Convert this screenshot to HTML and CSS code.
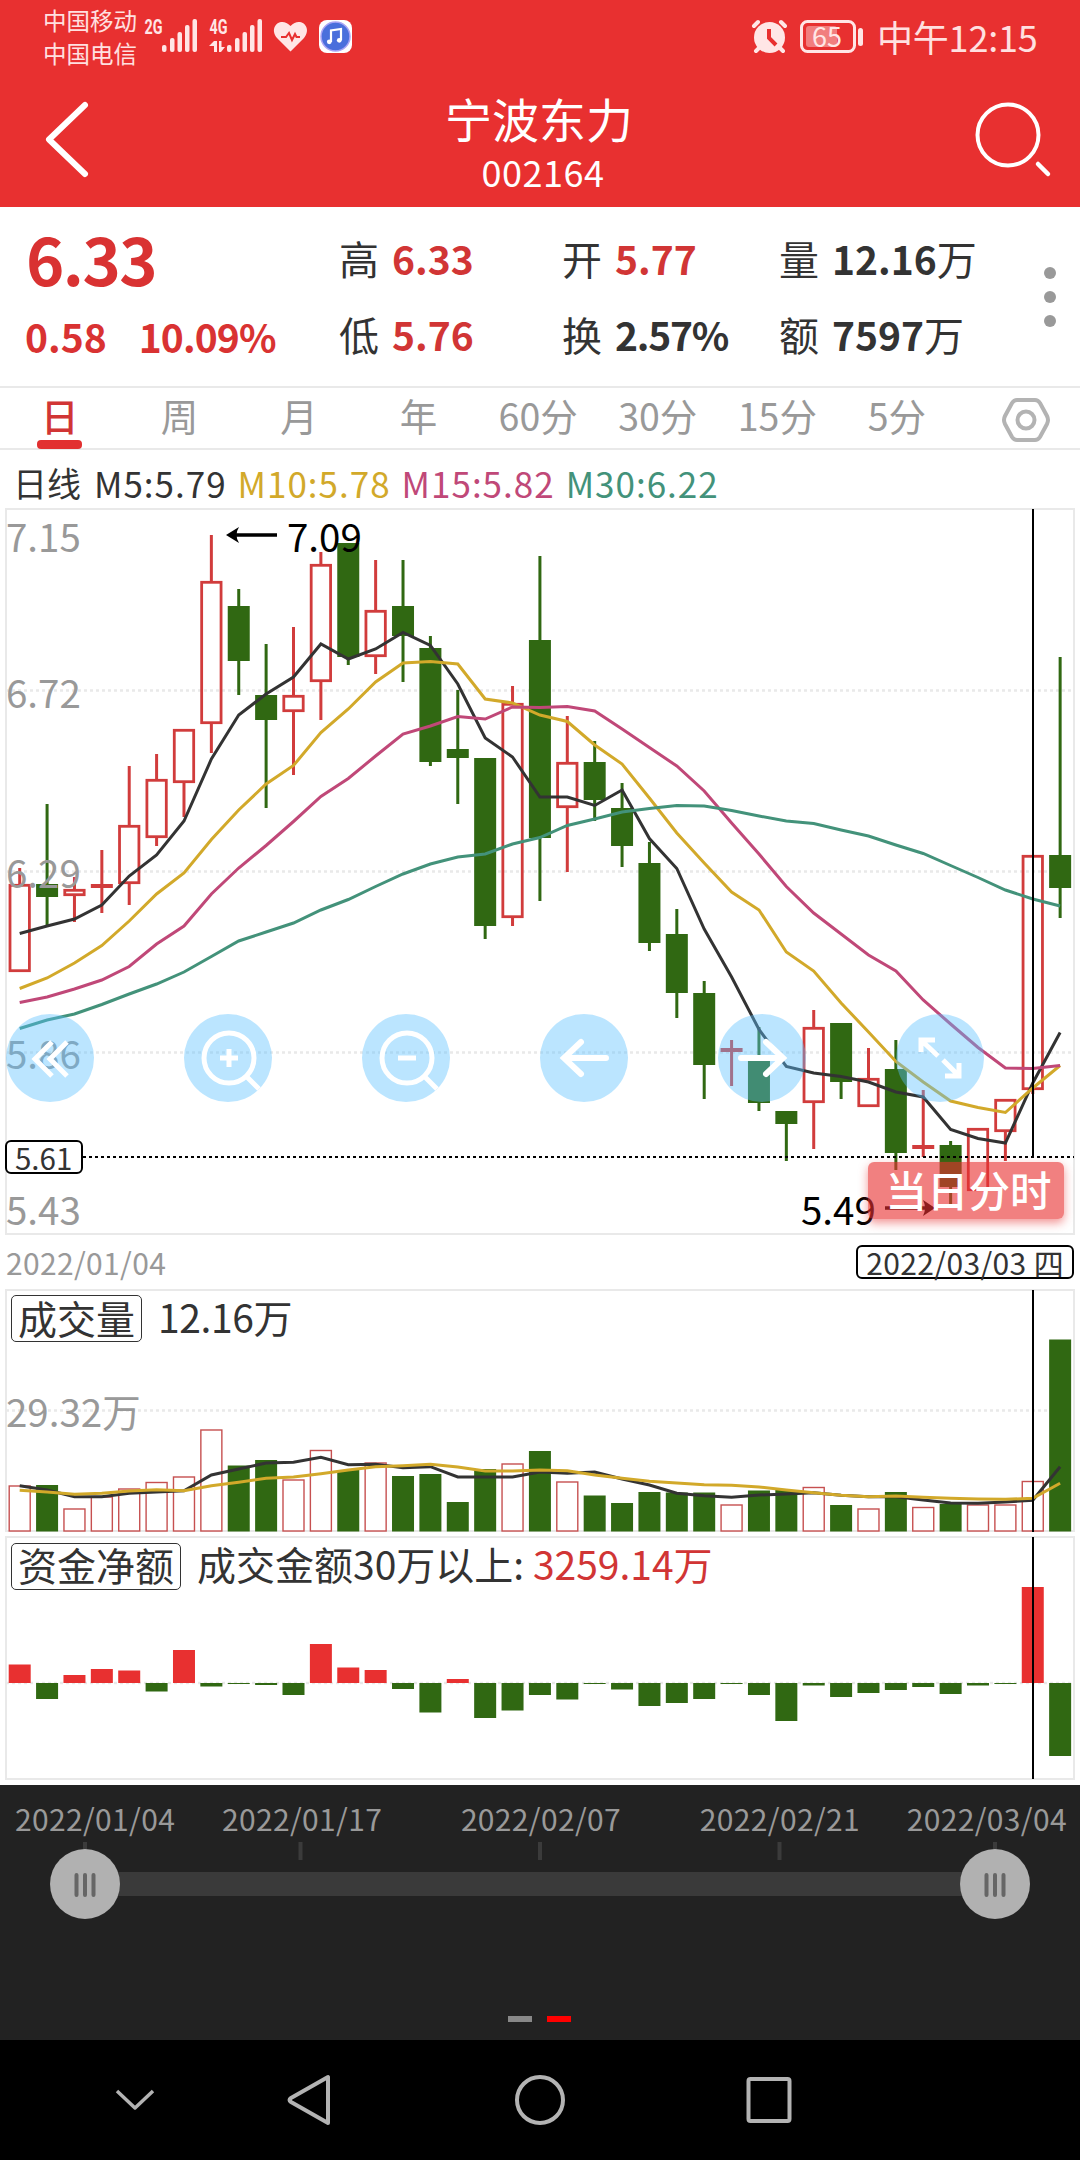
FILE: index.html
```
<!DOCTYPE html>
<html lang="zh-CN">
<head>
  <meta charset="UTF-8" />
  <meta name="viewport" content="width=device-width, initial-scale=1.0"/>
  <title>宁波东力 002164</title>
  <link rel="stylesheet" href="styles.css">
</head>
<body>
  <header class="top">
    <div class="status-bar">
      <div class="carriers">
        <span>中国移动</span>
        <span>中国电信</span>
      </div>
      <svg class="status-icons" width="220" height="72" viewBox="140 0 220 72">
        <g fill="#ffe6e6">
          <text x="144.500" y="34" class="net" textLength="18" lengthAdjust="spacingAndGlyphs">2G</text>
          <rect x="162" y="45" width="4.500" height="7" rx="2"/>
          <rect x="170" y="38" width="4.500" height="14" rx="2"/>
          <rect x="177.500" y="32" width="4.500" height="20" rx="2"/>
          <rect x="185" y="25" width="4.500" height="27" rx="2"/>
          <rect x="192.500" y="19" width="4.500" height="33" rx="2"/>
          <text x="209.500" y="34" class="net" textLength="18" lengthAdjust="spacingAndGlyphs">4G</text>
          <path d="M209 46L214 41H217V52H214V46ZM219 41H221.500V47H225L221 52H219Z"/>
          <rect x="227" y="45" width="4.500" height="7" rx="2"/>
          <rect x="235" y="38" width="4.500" height="14" rx="2"/>
          <rect x="242.500" y="32" width="4.500" height="20" rx="2"/>
          <rect x="250" y="25" width="4.500" height="27" rx="2"/>
          <rect x="257.500" y="19" width="4.500" height="33" rx="2"/>
          <path d="M290.500 51.500L277 38C268 27 281 16 290.500 26C300 16 313 27 304 38Z"/>
        </g>
        <path d="M281 37H286L289 33L292 40L295 34L296.500 37H300" fill="none" stroke="#e83030" stroke-width="2"/>
        <rect x="319" y="20" width="33" height="33" rx="8" fill="#fff"/>
        <circle cx="335.500" cy="36.500" r="14.500" fill="#4a6fdc" stroke="#a9a4f5" stroke-width="1.500"/>
        <path d="M331 42V30.500L341 29V40" fill="none" stroke="#fff" stroke-width="2.200"/>
        <circle cx="329.300" cy="41.800" r="2.400" fill="#fff"/>
        <circle cx="339.300" cy="40.300" r="2.400" fill="#fff"/>
      </svg>
      <div class="status-right">
        <svg width="115" height="72" viewBox="750 0 115 72">
          <circle cx="769.500" cy="37.500" r="15.500" fill="#ffe6e6"/>
          <path d="M754 26L758 22M785 26L781 22M756 51L760 47M783 51L779 47" stroke="#ffe6e6" stroke-width="4" stroke-linecap="round"/>
          <path d="M769 29V38L776 45" fill="none" stroke="#e83030" stroke-width="4"/>
          <rect x="801.500" y="21.500" width="53" height="30" rx="6" fill="none" stroke="#ffe6e6" stroke-width="3"/>
          <rect x="806" y="26" width="31" height="21" rx="3" fill="#f17e7e"/>
          <rect x="858" y="28" width="5" height="18" rx="2.500" fill="#ffe6e6"/>
          <text x="812" y="46.500" class="battery-text">65</text>
        </svg>
        <span class="clock">中午12:15</span>
      </div>
    </div>
    <div class="title-bar">
      <svg width="50" height="84" viewBox="44 97 50 84"><path d="M85 105L49 139.500L85 174" fill="none" stroke="#fff" stroke-width="6" stroke-linecap="round" stroke-linejoin="round"/></svg>
      <div class="title">
        <h1>宁波东力</h1>
        <p>002164</p>
      </div>
      <svg width="80" height="84" viewBox="974 97 80 84"><circle cx="1008" cy="135" r="30.500" fill="none" stroke="#fff" stroke-width="4"/><path d="M1038 164L1048 174" stroke="#fff" stroke-width="4.500" stroke-linecap="round"/></svg>
    </div>
  </header>

  <section class="quote">
    <div class="price">
      <strong>6.33</strong>
      <div class="change"><b>0.58</b><b>10.09%</b></div>
    </div>
    <div class="stat s1"><p>高 <b class="up">6.33</b></p><p>低 <b class="up">5.76</b></p></div>
    <div class="stat s2"><p>开 <b class="up">5.77</b></p><p>换 <b class="rate">2.57%</b></p></div>
    <div class="stat s3"><p>量 <b>12.16</b>万</p><p>额 <b>7597</b>万</p></div>
    <div class="more"><i></i><i></i><i></i></div>
  </section>

  <nav class="tabs">
    <a class="active">日</a><a>周</a><a>月</a><a>年</a><a>60分</a><a>30分</a><a>15分</a><a>5分</a>
    <svg width="50" height="46" viewBox="0 0 50 46" fill="none" stroke="#b3b3b3" stroke-width="4">
      <path d="M16 3H34Q37 3 39 6L46 19Q48 23 46 27L39 40Q37 43 34 43H16Q13 43 11 40L4 27Q2 23 4 19L11 6Q13 3 16 3Z"/>
      <circle cx="25" cy="23" r="8.500"/>
    </svg>
  </nav>

  <div class="legend">
    <span>日线</span><span>M5:5.79</span><span class="m10">M10:5.78</span><span class="m15">M15:5.82</span><span class="m30">M30:6.22</span>
  </div>

  <section class="k-panel">
    <svg id="k-chart" width="1080" height="729" viewBox="0 508 1080 729"></svg>
    <div class="tools">
      <button><svg viewBox="0 0 88 88"><path d="M46 28L29 45L46 62M61 28L44 45L61 62"/></svg></button>
      <button><svg viewBox="0 0 88 88"><circle cx="45" cy="44" r="25"/><path d="M63 63L75 75M36 44H54M45 35V53"/></svg></button>
      <button><svg viewBox="0 0 88 88"><circle cx="45" cy="44" r="25"/><path d="M63 63L75 75M36 44H54"/></svg></button>
      <button><svg viewBox="0 0 88 88"><path class="round" d="M41 28L24 44L41 60M26 44H66"/></svg></button>
      <button><svg viewBox="0 0 88 88"><path class="round" d="M48 28L65 44L48 60M63 44H23"/></svg></button>
      <button><svg viewBox="0 0 88 88"><path d="M25 38V26H39M26 27L42 42M47 46L63 62M63 49V62H49"/></svg></button>
    </div>
    <button class="minute">当日分时</button>
  </section>

  <div class="dates">
    <span>2022/01/04</span>
    <span class="picked">2022/03/03 四</span>
  </div>

  <section class="sub-panel volume">
    <svg id="vol-chart" width="1080" height="246" viewBox="0 1289 1080 246"></svg>
    <div class="sub-title"><span class="tag">成交量</span><span class="value">12.16万</span></div>
  </section>
  <section class="sub-panel fund">
    <svg id="fund-chart" width="1080" height="250" viewBox="0 1535 1080 250"></svg>
    <div class="sub-title"><span class="tag">资金净额</span><span>成交金额30万以上: <em>3259.14万</em></span></div>
  </section>

  <section class="range">
    <div class="range-dates">
      <span>2022/01/04</span><span>2022/01/17</span><span>2022/02/07</span><span>2022/02/21</span><span>2022/03/04</span>
    </div>
    <svg class="slider" width="1080" height="80" viewBox="0 1840 1080 80">
      <path d="M85 1842V1860M300.500 1842V1860M540 1842V1860M779.500 1842V1860M995 1842V1860" stroke="#3b3b3b" stroke-width="4"/>
      <rect x="85" y="1872" width="910" height="24" fill="#3a3a3a"/>
      <circle cx="85" cy="1884" r="35" fill="#b1b1b1"/>
      <circle cx="995" cy="1884" r="35" fill="#b1b1b1"/>
      <path d="M76.500 1875V1895M85 1875V1895M93.500 1875V1895M986.500 1875V1895M995 1875V1895M1003.500 1875V1895" stroke="#666" stroke-width="4" stroke-linecap="round"/>
    </svg>
    <div class="pager"><i></i><i class="on"></i></div>
  </section>

  <footer class="nav-bar">
    <svg width="1080" height="120" viewBox="0 2040 1080 120" fill="none" stroke="#b3b3b3" stroke-width="4" stroke-linejoin="round">
      <path d="M117 2091L135 2108L153 2091" stroke-width="3.500"/>
      <path d="M328 2077V2123L291 2102Q288 2100 291 2098Z"/>
      <circle cx="540" cy="2100" r="23"/>
      <rect x="748.500" y="2079" width="41" height="42" rx="2"/>
    </svg>
  </footer>

  <script src="chart.js"></script>
</body>
</html>
```
FILE: styles.css
```
* {
  box-sizing: border-box;
}
body {
  margin: 0;
  width: 1080px;
  height: 2160px;
  overflow: hidden;
  background: #fff;
  color: #333;
  font-family: "Noto Sans CJK SC", "Noto Sans", sans-serif;
}
h1, p {
  margin: 0;
  font-weight: normal;
}
svg {
  display: block;
}
button {
  border: none;
  padding: 0;
  font-family: inherit;
}

/* status bar + title */
.top {
  height: 207px;
  background: #e83030;
  color: #fff;
}
.status-bar {
  height: 74px;
  padding-left: 43px;
  display: flex;
  color: #ffe0e0;
}
.carriers {
  width: 97px;
  padding-top: 4px;
  display: flex;
  flex-direction: column;
  font-size: 23.5px;
  line-height: 33px;
}
.net {
  font: bold 21px Roboto, sans-serif;
}
.status-right {
  margin-left: auto;
  margin-right: 40px;
  display: flex;
}
.battery-text {
  font-size: 27px;
  fill: #ffe6e6;
}
.clock {
  margin-left: 12px;
  font-size: 36px;
  line-height: 73px;
  width: 163px;
  letter-spacing: -0.2px;
  white-space: nowrap;
}
.title-bar {
  padding: 23px 26px 0 44px;
  display: flex;
  justify-content: space-between;
}
.title {
  padding-left: 10px;
  text-align: center;
}
.title h1 {
  font-size: 47px;
  line-height: 42px;
}
.title p {
  font-size: 36px;
  line-height: 40px;
  margin-top: 12px;
  padding-left: 8px;
  letter-spacing: 0.5px;
}

/* quote */
.quote {
  height: 181px;
  padding: 20px 0 0 25px;
  display: flex;
  border-bottom: 2px solid #e9e9e9;
}
.price {
  width: 314px;
  color: #d93232;
}
.price strong {
  display: block;
  font-size: 65px;
  line-height: 62px;
  letter-spacing: -1.5px;
  padding-left: 1px;
}
.change {
  display: flex;
  gap: 32px;
  margin-top: 17px;
}
.change b {
  font-size: 39px;
  line-height: 60px;
  letter-spacing: -0.9px;
}
.change b:first-child {
  letter-spacing: 0;
}
.quote b {
  font-weight: 600;
}
.stat p {
  font-size: 40px;
  line-height: 63px;
  white-space: nowrap;
}
.stat p + p {
  margin-top: 13px;
}
.stat b {
  font-size: 39px;
  margin-left: 4px;
}
.stat .rate {
  letter-spacing: -1.2px;
}
.s1 {
  width: 223px;
}
.s2 {
  width: 217px;
}
.s3 {
  width: 265px;
}
.up {
  color: #d13535;
}
.more {
  display: flex;
  flex-direction: column;
  gap: 12px;
  padding-top: 40px;
}
.more i {
  width: 12px;
  height: 12px;
  border-radius: 50%;
  background: #999;
}

/* tabs */
.tabs {
  height: 62px;
  display: flex;
  border-bottom: 2px solid #e9e9e9;
}
.tabs a {
  width: 119.6px;
  font-size: 37.5px;
  line-height: 54px;
  text-align: center;
  color: #999;
}
.tabs .active {
  color: #d13535;
  font-weight: 500;
}
.tabs .active::after {
  content: "";
  display: block;
  width: 45px;
  height: 9px;
  margin: -2px auto 0;
  border-radius: 4px;
  background: #e23030;
}
.tabs svg {
  margin: 9px 0 0 44px;
}
.legend {
  height: 58px;
  padding-left: 13px;
  display: flex;
  gap: 11px;
  font-size: 35px;
  line-height: 65px;
  letter-spacing: 1px;
  white-space: nowrap;
}
.legend span:first-child {
  font-size: 34px;
  letter-spacing: 0;
  margin-right: 2px;
}
.m10 {
  color: #d2a92a;
}
.m15 {
  color: #c04878;
}
.m30 {
  color: #43927a;
}

/* charts */
.k-panel {
  position: relative;
  height: 729px;
}
.k-panel text, .sub-panel text {
  font-size: 38.5px;
}
.k-panel .small {
  font-size: 29.5px;
}
.tools {
  position: absolute;
  left: 6px;
  top: 506px;
  display: flex;
  gap: 90px;
}
.tools button {
  width: 88px;
  height: 88px;
  border-radius: 50%;
  background: rgba(89, 191, 255, 0.41);
}
.tools svg {
  fill: none;
  stroke: #fff;
  stroke-width: 5;
}
.tools .round {
  stroke-width: 6;
  stroke-linecap: round;
}
.minute {
  position: absolute;
  left: 868px;
  top: 654px;
  width: 196px;
  height: 57px;
  padding: 0 0 4px 5px;
  border-radius: 6px;
  background: rgba(232, 48, 48, 0.61);
  box-shadow: 0 4px 10px rgba(232, 48, 48, 0.5);
  color: #fff;
  font-size: 41.5px;
  font-weight: 500;
  line-height: 50px;
}
.dates {
  height: 52px;
  padding: 8px 6px 0;
  display: flex;
  justify-content: space-between;
  font-size: 30px;
  line-height: 35px;
  letter-spacing: 0.35px;
  color: #999;
}
.picked {
  height: 34px;
  padding: 0 8px;
  border: 2px solid #000;
  border-radius: 6px;
  line-height: 30px;
  color: #333;
}
.sub-panel {
  position: relative;
}
.volume {
  height: 246px;
}
.fund {
  height: 250px;
}
.sub-title {
  position: absolute;
  left: 11px;
  top: 6px;
  display: flex;
  gap: 16px;
  font-size: 39px;
  line-height: 43px;
  white-space: nowrap;
}
.sub-title .value {
  letter-spacing: -0.4px;
}
.fund .sub-title {
  top: 8px;
  line-height: 41px;
}
.tag {
  height: 47px;
  padding: 0 6px;
  border: 1.5px solid #333;
  border-radius: 5px;
}
.sub-title em {
  font-style: normal;
  color: #d13535;
}

/* range slider */
.range {
  height: 255px;
  background: #222;
}
.range-dates {
  display: flex;
  justify-content: space-between;
  height: 55px;
  padding: 5px 13px 0 15px;
  font-size: 30px;
  line-height: 57px;
  letter-spacing: 0.35px;
  color: #999;
}
.range-dates span:nth-child(2) {
  margin-right: 32px;
}
.range-dates span:nth-child(4) {
  margin-left: 32px;
}
.pager {
  display: flex;
  justify-content: center;
  gap: 15px;
  padding: 96px 2px 0 0;
}
.pager i {
  width: 24px;
  height: 6px;
  background: #888;
}
.pager .on {
  background: #f00;
}
.nav-bar {
  height: 120px;
  background: #000;
}
```
FILE: chart.js
```
const RED = "#d13c3c";
const GREEN = "#306812";
const x = i => 19.7 + i * 27.38;

// [up, high, top, bottom, low]
const candles = [
  [1,868,884,972,972],[0,804,884,897,926],[1,877,889,896,922],[1,850,884,888,913],[1,766,825,884,905],
  [1,754,779,838,846],[1,729,729,783,817],[1,535,581,724,753],[0,589,606,661,695],[0,644,695,720,808],
  [1,627,695,712,775],[1,552,564,682,720],[0,543,543,657,665],[1,560,610,657,674],[0,560,606,636,682],
  [0,636,648,762,766],[0,690,749,758,804],[0,758,758,926,939],[1,686,703,918,926],[0,556,640,838,901],
  [1,716,762,808,872],[0,741,762,800,821],[0,783,808,846,867],[0,842,863,943,951],[0,909,934,993,1018],
  [0,981,993,1065,1099],[1,1040,1048,1052,1086],[0,1027,1061,1103,1111],[0,1111,1111,1124,1161],[1,1010,1027,1103,1149],
  [0,1023,1023,1082,1099],[1,1048,1078,1107,1107],[0,1040,1069,1153,1170],[1,1090,1145,1149,1157],[0,1141,1145,1187,1208],
  [1,1128,1128,1191,1191],[1,1099,1099,1132,1161],[1,855,855,1090,1094],[0,657,855,888,918]
];

const ma5 = [933.5,926,919,905,876,855,821,759,715,694,677,644,659,649,632.5,645.5,684,738,757,797,797,805.5,790,838.5,868.5,929,977,1029.5,1066.5,1073,1076.5,1082,1092,1097,1129.5,1138.5,1143,1083,1032.5];
const ma10 = [988.5,978,963,945.5,921,894,873,839.5,810,784,765.5,732.5,709,682,663,661.5,664,699,703,715,721.5,745,764,798,833,863,892,910,952,971,1003,1032,1061.5,1082,1101,1107.5,1112.5,1088,1065.5];
const ma15 = [1002.5,997,989,980,966.5,944,926,894,868,845.5,821.5,796.5,778.5,756,734,726,716.5,719,707,707.5,706.5,711,729,747.5,766,791,823,854,886.5,913,934,955,971,1000,1024,1047.5,1068,1068.5,1065.5];
const ma30 = [1028.5,1020,1014,1004.5,994,984,972,956.5,941,932,923,910,899.5,886.5,874,864,857,854,844,837.5,825.5,819,812,808.5,805.5,806,810.5,816,821,823.5,830,836,845,853.5,865.5,877.5,890,899,906];

const volTop = [1486,1485,1509,1497,1489,1482.5,1477,1430,1465.5,1460,1480,1450.5,1470,1463,1476,1474,1502,1469,1464,1451,1482,1495.5,1503,1492,1492.5,1492.5,1505,1490.5,1490,1487.5,1505,1509,1492,1507.5,1504,1505,1505,1481.5,1339.5];
const vol5 = [1485.7,1490,1496.7,1496.7,1493.3,1492,1490.7,1475,1469,1463,1462.3,1457.3,1464.7,1464.3,1467.7,1466.7,1477,1477,1477,1472,1473.3,1472,1479,1485,1493.3,1495.7,1497.3,1495,1494,1492.7,1495.3,1496.7,1496.7,1500,1503,1503.3,1502,1500.3,1466.7];
const vol10 = [1490.3,1492,1494.3,1493.3,1491,1489.7,1490.7,1485.7,1482.3,1478.3,1477,1473.7,1470,1466.7,1465.7,1464.3,1467,1471,1471,1470,1470.7,1475,1478.3,1481.3,1483,1484.7,1485.3,1487,1490,1492.7,1495.3,1496.7,1496,1497.3,1498.3,1499,1499.3,1498.3,1483.3];

const fund = [18.5,-16,8,14,12.5,-8.5,33,-3.5,-1,-2,-12,39,15.5,13,-6,-29.5,4,-35,-27.5,-12,-16.5,-1,-6.5,-23,-20,-16,-1,-12,-38,-2.5,-14,-10,-7,-4,-11,-2.5,-1,96,-73];

const line = (data, color, w = 3) =>
  `<polyline points="${data.map((y, i) => x(i).toFixed(1) + "," + y).join(" ")}" fill="none" stroke="${color}" stroke-width="${w}"/>`;
const grid = y => `<path d="M6 ${y}H1074" stroke="#e9e9e9" stroke-width="2.500" stroke-dasharray="3 3"/>`;
const frame = (top, bottom) => `<rect x="6" y="${top}" width="1068" height="${bottom - top}" fill="none" stroke="#e9e9e9" stroke-width="2"/>`;
const label = (tx, y, str, color = "#999", cls = "") => `<text x="${tx}" y="${y}" fill="${color}" class="${cls}">${str}</text>`;
const cursor = (y1, y2) => `<path d="M1033 ${y1}V${y2}" stroke="#000" stroke-width="2"/>`;

function drawK() {
  let s = frame(509, 1234) + grid(690.5) + grid(871.5) + grid(1052.5);
  candles.forEach(([up, high, top, bottom, low], i) => {
    const c = up ? RED : GREEN;
    s += `<path d="M${x(i)} ${high}V${top}M${x(i)} ${bottom}V${low}" stroke="${c}" stroke-width="3"/>`;
    if (up && bottom - top > 5) {
      s += `<rect x="${x(i) - 9.7}" y="${top + 1.3}" width="19.400" height="${bottom - top - 2.6}" fill="none" stroke="${c}" stroke-width="2.800"/>`;
    } else {
      s += `<rect x="${x(i) - 11}" y="${top}" width="22" height="${bottom - top}" fill="${c}"/>`;
    }
  });
  s += label(6, 551.5, "7.15") + label(6, 707.5, "6.72") + label(6, 888, "6.29") + label(6, 1069, "5.86") + label(6, 1224.5, "5.43");
  s += line(ma5, "#333") + line(ma10, "#d2a92a") + line(ma15, "#c04878") + line(ma30, "#43927a");
  s += label(287, 551.5, "7.09", "#000") + label(801, 1224.5, "5.49", "#000");
  s += `<path d="M230 535H277M885 1208H930" stroke="#000" stroke-width="3.500"/>
    <path d="M226 535L239 527Q234 535 239 543ZM935 1208L923 1200Q927 1208 923 1216Z"/>`;
  s += `<path d="M83 1157H1074" stroke="#000" stroke-width="2" stroke-dasharray="3 3"/>` + cursor(509, 1158);
  s += `<rect x="6" y="1141" width="76" height="32" rx="5" fill="#fff" stroke="#000" stroke-width="2"/>` + label(15, 1170, "5.61", "#333", "small");
  document.getElementById("k-chart").innerHTML = s;
}

function drawVolume() {
  let s = frame(1290, 1531) + grid(1410.5) + label(6, 1427, "29.32万");
  volTop.forEach((top, i) => {
    if (candles[i][0]) {
      s += `<rect x="${x(i) - 10.5}" y="${top}" width="21" height="${1531 - top}" fill="#fff" stroke="#c65050" stroke-width="1.400"/>`;
    } else {
      s += `<rect x="${x(i) - 11}" y="${top}" width="22" height="${1531.5 - top}" fill="${GREEN}"/>`;
    }
  });
  s += line(vol5, "#333") + line(vol10, "#d2a92a") + cursor(1290, 1532);
  document.getElementById("vol-chart").innerHTML = s;
}

function drawFund() {
  let s = frame(1537, 1779) + grid(1683);
  fund.forEach((v, i) => {
    s += `<rect x="${x(i) - 11}" y="${v > 0 ? 1683 - v : 1683}" width="22" height="${Math.abs(v)}" fill="${v > 0 ? "#e83030" : GREEN}"/>`;
  });
  s += cursor(1537, 1779);
  document.getElementById("fund-chart").innerHTML = s;
}

drawK();
drawVolume();
drawFund();
```
